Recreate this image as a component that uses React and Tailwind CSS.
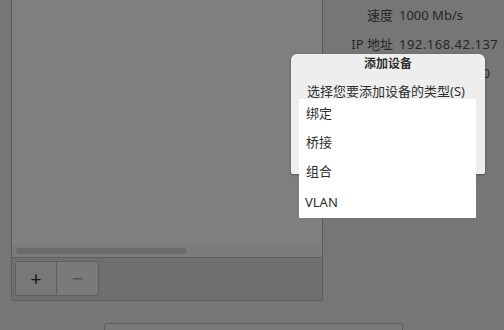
export default function App() {
  const font = { fontFamily: '"Noto Sans", "Noto Sans CJK SC", sans-serif' };
  return (
    <div
      className="relative w-[504px] h-[330px] overflow-hidden bg-[#767676] text-[#262626]"
      style={font}
    >
      <div className="flex">
        {/* left device panel */}
        <div className="ml-[11px] w-[312px] h-[301px] flex flex-col border-x border-b border-[#5c5c5c] rounded-b-[3px] overflow-hidden">
          <div className="flex-1 bg-[#7f7f7f]" />
          <div className="h-[13px] bg-[#7b7b7b] flex items-center px-[4px]">
            <div className="w-[170px] h-[6px] rounded-full bg-[#6b6b6b]" />
          </div>
          <div className="h-[43px] bg-[#6f6f6f] border-t border-[#5e5e5e] flex items-start pt-[3px] pl-[3px]">
            <button className="w-[42px] h-[35px] bg-[#787878] border border-[#5e5e5e] rounded-l-[3px] flex items-center justify-center text-[#1a1a1a] text-[20px] leading-none">
              +
            </button>
            <button className="w-[42px] h-[35px] bg-[#7a7a7a] border border-l-0 border-[#5e5e5e] rounded-r-[3px] flex items-center justify-center text-[#555] text-[20px] leading-none">
              −
            </button>
          </div>
        </div>

        {/* details */}
        <div className="flex-1 pt-[1px] text-[13px]">
          <div className="flex h-[29px] items-center">
            <span className="w-[70px] text-right">速度</span>
            <span className="ml-[6px]">1000 Mb/s</span>
          </div>
          <div className="flex h-[29px] items-center">
            <span className="w-[70px] text-right">IP 地址</span>
            <span className="ml-[6px] tracking-[0.5px]">192.168.42.137</span>
          </div>
          <div className="flex h-[29px] items-center">
            <span className="w-[70px] text-right">默认路由</span>
            <span className="ml-[6px] tracking-[0.5px]">192.168.42.10</span>
          </div>
        </div>
      </div>

      {/* bottom button */}
      <div className="absolute left-[104px] top-[323px] w-[299px] h-[20px] border border-[#5c5c5c] rounded-[3px] bg-[#797979]" />

      {/* add device dialog */}
      <div className="absolute left-[291px] top-[54px] w-[194px] h-[120px] bg-[#eeeeee] rounded-t-[6px] rounded-b-[2px] shadow-[0_1px_3px_rgba(0,0,0,0.3)]">
        <div className="h-[19px] flex items-center justify-center text-[12px] font-bold text-[#2e2e2e]">
          添加设备
        </div>
        <div className="mt-[12px] pl-[16px] text-[13px] text-[#2e2e2e] leading-none">
          选择您要添加设备的类型(S)
        </div>
      </div>

      {/* type list */}
      <div className="absolute left-[299px] top-[99px] w-[177px] bg-white text-[13px] text-[#2e2e2e]">
        <div className="h-[29px] flex items-center pl-[7px]">绑定</div>
        <div className="h-[29px] flex items-center pl-[7px]">桥接</div>
        <div className="h-[29px] flex items-center pl-[7px]">组合</div>
        <div className="mt-[2px] h-[30px] flex items-center pl-[6px]">VLAN</div>
      </div>
    </div>
  );
}
